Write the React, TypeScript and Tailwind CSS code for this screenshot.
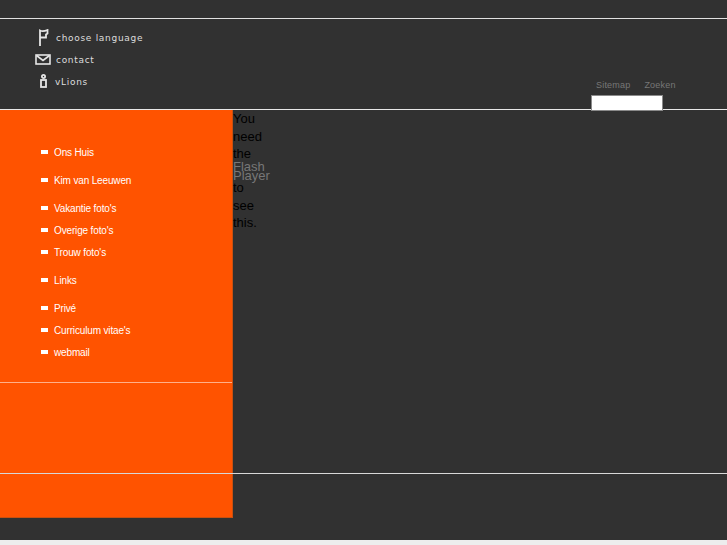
const DV = "font-['DejaVu_Sans',sans-serif]";

function Flag() {
  return (
    <svg width="11" height="17" viewBox="0 0 11 17" fill="none" stroke="#e6e6e6" strokeWidth="1.8">
      <path d="M2 17V1.5C4 2.5 6 2.5 9.5 1V4.5L8 5.5V8.5H2" />
    </svg>
  );
}
function Mail() {
  return (
    <svg width="16" height="11" viewBox="0 0 16 11" fill="none" stroke="#e6e6e6" strokeWidth="1.6">
      <rect x="1" y="1" width="14" height="9" />
      <path d="M1.5 1.5L8 6.5L14.5 1.5" />
    </svg>
  );
}
function Lion() {
  return (
    <svg width="7" height="14" viewBox="0 0 7 14" fill="none" stroke="#e6e6e6" strokeWidth="1.8">
      <circle cx="3.5" cy="2.5" r="1.6" />
      <rect x="1" y="6" width="5" height="7" />
    </svg>
  );
}

const groups: { label: string; h: string; ml?: string }[] = [
  { label: "Ons Huis", h: "h-[28px]", ml: "ml-[-1px]" },
  { label: "Kim van Leeuwen", h: "h-[28px]" },
  { label: "Vakantie foto's", h: "h-[22px]" },
  { label: "Overige foto's", h: "h-[22px]", ml: "ml-[-1px]" },
  { label: "Trouw foto's", h: "h-[28px]" },
  { label: "Links", h: "h-[28px]" },
  { label: "Privé", h: "h-[22px]" },
  { label: "Curriculum vitae's", h: "h-[22px]" },
  { label: "webmail", h: "h-[22px]", ml: "ml-[-1px]" },
];

export default function App() {
  return (
    <div className="w-[727px] h-[545px] overflow-hidden bg-[#313131] flex flex-col">
      <div className="h-[18px] shrink-0" />
      <div className="h-px shrink-0 bg-[#e0e0e0]" />
      <header className="h-[90px] shrink-0 flex justify-between">
        <nav className={`${DV} pt-[9px] text-[9px] tracking-[0.7px] text-[#dddddd]`}>
          <div className="flex items-center h-[22px]">
            <span className="ml-[38px] w-[18px] -mt-[4px]"><Flag /></span>
            <span>choose language</span>
          </div>
          <div className="flex items-center h-[22px]">
            <span className="ml-[35px] w-[21px] -mt-[4px]"><Mail /></span>
            <span>contact</span>
          </div>
          <div className="flex items-center h-[22px]">
            <span className="ml-[40px] w-[15px] -mt-[4px]"><Lion /></span>
            <span>vLions</span>
          </div>
        </nav>
        <div className="w-[136px] pt-[59px] flex flex-col">
          <div className="flex h-[17px] shrink-0 items-start pl-[5px] gap-[14px] font-['Liberation_Sans',sans-serif] text-[9px] leading-[14px] tracking-[0.2px] text-[#777777]">
            <span>Sitemap</span>
            <span>Zoeken</span>
          </div>
          <div className="relative z-10 shrink-0 w-[72px] h-[16px] bg-white border border-[#8a8a8a]" />
        </div>
      </header>
      <div className="h-px shrink-0 bg-[#e8e8e8]" />
      <main className="h-[363px] shrink-0 flex">
        <aside className="w-[233px] shrink-0 bg-[#ff5300] border-r border-r-[#c9500f] flex flex-col">
          <ul className="pt-[29px] h-[272px] shrink-0 font-['Liberation_Sans',sans-serif] text-[10px] tracking-[-0.15px] text-white">
            {groups.map((g) => (
              <li key={g.label} className={`${g.h} flex items-start`}>
                <span className="ml-[41px] mt-[11px] w-[7px] h-[4px] bg-white" />
                <span className={`ml-[6px] ${g.ml ?? ""} mt-[8px] leading-[11px]`}>{g.label}</span>
              </li>
            ))}
          </ul>
          <div className="h-px shrink-0 bg-[#ffb08a]" />
        </aside>
        <div className="font-['Liberation_Sans',sans-serif] w-[40px] text-[13px] leading-[17.6px] text-black">
          <div>You</div>
          <div>need</div>
          <div>the</div>
          <div className="text-[#777777] h-[9px] -mt-[3px] leading-[13px]">Flash</div>
          <div className="text-[#777777] h-[10.4px] leading-[13px] whitespace-nowrap">Player</div>
          <div>to</div>
          <div>see</div>
          <div>this.</div>
        </div>
      </main>
      <div className="h-px shrink-0 bg-[#d8d8d8]" />
      <div className="h-[44px] shrink-0">
        <div className="w-[233px] h-full bg-[#ff5300] border-r border-b border-[#c9500f]" />
      </div>
      <div className="h-[22px] shrink-0" />
      <div className="grow bg-[#ededed]" />
    </div>
  );
}
